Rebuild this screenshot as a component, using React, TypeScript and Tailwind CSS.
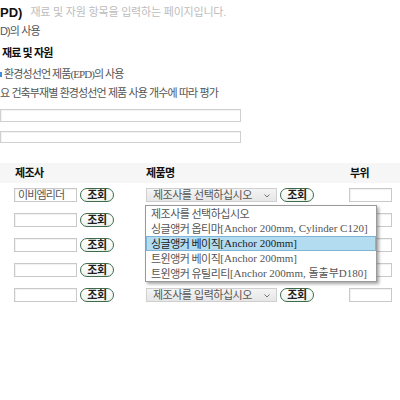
const sans = "font-['Liberation_Sans','Noto_Sans_CJK_KR',sans-serif]"
const serif = "font-['Liberation_Serif','Noto_Sans_CJK_KR',serif]"

function SearchButton() {
  return (
    <button className="flex h-[14px] w-[34px] items-center justify-center rounded-full border border-[#3d6b4c] bg-gradient-to-b from-white to-[#eef3ee] text-[11px] font-bold leading-none tracking-[-0.3px] text-[#1d1d1d]">
      조회
    </button>
  )
}

function TextBox({ value, className }: { value?: string; className?: string }) {
  return (
    <div className={`flex h-[14px] items-center border border-[#c9c9c9] bg-white px-[3px] text-[11px] leading-none tracking-[-0.9px] text-[#555] shadow-[inset_1px_1px_1px_rgba(0,0,0,0.06)] ${className ?? ''}`}>
      {value}
    </div>
  )
}

function FakeSelect({ label }: { label: string }) {
  return (
    <div className="flex h-[14px] w-[131px] items-center justify-between border border-[#cfcfcf] bg-gradient-to-b from-[#f4f4f4] to-[#e6e6e6] pl-[6px] pr-[6px] text-[11px] leading-none text-[#555]">
      <span className="tracking-[-0.5px]">{label}</span>
      <svg width="6" height="4" viewBox="0 0 6 4" className="mt-[1px]">
        <path d="M0.5 0.5 L3 3 L5.5 0.5" fill="none" stroke="#666" strokeWidth="0.9" />
      </svg>
    </div>
  )
}

const options = [
  ['제조사를 선택하십시오', ''],
  ['싱글앵커 옵티마', '[Anchor 200mm, Cylinder C120]'],
  ['싱글앵커 베이직', '[Anchor 200mm]'],
  ['트윈앵커 베이직', '[Anchor 200mm]'],
  ['트윈앵커 유틸리티', '[Anchor 200mm, 돌출부D180]'],
]

export default function App() {
  const rows = [
    { maker: '이비엠리더', select: '제조사를 선택하십시오' },
    { maker: '', select: '' },
    { maker: '', select: '' },
    { maker: '', select: '' },
    { maker: '', select: '제조사를 입력하십시오' },
  ]

  return (
    <div className={`relative h-[400px] w-[400px] overflow-hidden bg-white ${sans}`}>
      <div className="flex h-[24px] items-center">
        <span className="text-[13px] font-bold leading-none text-[#111]">PD)</span>
        <span className="ml-[8px] mt-[1px] text-[11px] leading-none tracking-[-0.2px] text-[#bdbdbd]">재료 및 자원 항목을 입력하는 페이지입니다.</span>
      </div>
      <p className="flex h-[14px] items-center text-[11px] tracking-[-0.9px] text-[#555]">D)의 사용</p>

      <p className="mt-[8px] flex h-[14px] items-center pl-[2px] text-[11px] font-bold tracking-[-0.9px] text-[#111]">재료 및 자원</p>
      <p className={`mt-[7px] flex h-[14px] items-center text-[11px] tracking-[-0.9px] text-[#555] ${serif}`}>
        <span className="mr-[2px] h-[5px] w-[2px] bg-[#3d8fd6]" />
        환경성선언 제품(EPD)의 사용
      </p>
      <p className="mt-[5px] flex h-[15px] items-center text-[11px] tracking-[-0.9px] text-[#555]">요 건축부재별 환경성선언 제품 사용 개수에 따라 평가</p>

      <div className="mt-[8px] flex flex-col gap-[9px]">
        <div className="h-[13px] w-[241px] border border-[#d0d0d0] bg-white shadow-[inset_1px_1px_1px_rgba(0,0,0,0.05)]" />
        <div className="h-[12px] w-[241px] border border-[#d0d0d0] bg-white shadow-[inset_1px_1px_1px_rgba(0,0,0,0.05)]" />
      </div>

      <div className="mt-[20px] grid h-[20px] grid-cols-[145px_204px_1fr] items-center bg-[#f6f6f6] text-[11px] font-bold tracking-[-0.6px] text-[#111]">
        <span className="pl-[15px]">제조사</span>
        <span className="pl-[1px]">제품명</span>
        <span className="pl-[1px]">부위</span>
      </div>

      <div className="relative mt-[5px]">
        {rows.map((row, i) => (
          <div key={i} className="grid h-[25px] grid-cols-[145px_204px_1fr] items-start">
            <div className="flex items-center gap-[3px] pl-[14px]">
              <TextBox value={row.maker} className="w-[63px]" />
              <SearchButton />
            </div>
            <div className="flex items-center gap-[3px] pl-[1px]">
              {row.select && (
                <>
                  <FakeSelect label={row.select} />
                  <SearchButton />
                </>
              )}
            </div>
            <div>
              <TextBox className="w-[43px]" />
            </div>
          </div>
        ))}

        <div className={`absolute left-[145px] top-[17px] w-[232px] border border-[#9a9a9a] bg-white shadow-[2px_2px_3px_rgba(0,0,0,0.35)] ${serif}`}>
          {options.map(([ko, en], i) => (
            <div
              key={i}
              className={`flex h-[15px] items-center whitespace-nowrap pl-[4px] text-[11px] leading-none ${
                i === 2 ? 'border border-[#7fb4d4] bg-[#b3dcf1] text-[#222]' : 'border border-transparent text-[#555]'
              }`}
            >
              <span className="font-['Noto_Sans_CJK_KR',sans-serif] tracking-[-0.5px]">{ko}</span>
              {en && <span>{en}</span>}
            </div>
          ))}
        </div>
      </div>
    </div>
  )
}
